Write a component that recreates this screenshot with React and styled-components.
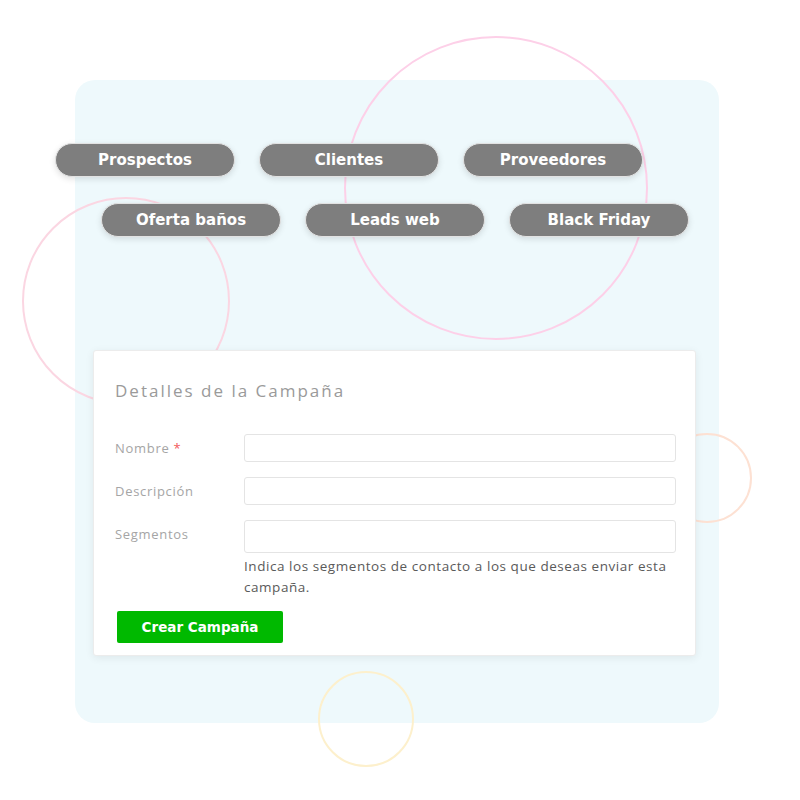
import React from "react";
import styled, { createGlobalStyle } from "styled-components";

const Global = createGlobalStyle`
  html, body { margin: 0; padding: 0; background: #ffffff; }
  body { font-family: "Open Sans", "Noto Sans", sans-serif; }
  * { box-sizing: border-box; }
`;

const Stage = styled.div`
  width: 800px;
  height: 800px;
  padding: 80px 81px 77px 75px;
`;

const Panel = styled.div`
  position: relative;
  width: 644px;
  height: 643px;
  background: #eef9fc;
  border-radius: 20px;
  display: flex;
  flex-direction: column;
`;

const Ring = styled.div`
  position: absolute;
  left: ${(p) => p.$x}px;
  top: ${(p) => p.$y}px;
  width: ${(p) => p.$size}px;
  height: ${(p) => p.$size}px;
  border-radius: 50%;
  border: 2px solid ${(p) => p.$color};
  z-index: 0;
`;

const TagArea = styled.div`
  position: relative;
  z-index: 1;
  margin: 63px 0 0 -20px;
  display: flex;
  flex-direction: column;
  gap: 26px;
`;

const TagRow = styled.div`
  display: flex;
  align-items: flex-start;
  gap: 24px;
  height: 34px;
  padding-left: ${(p) => p.$indent}px;
`;

const Tag = styled.div`
  width: 180px;
  height: 34px;
  border-radius: 17px;
  background: #7e7e7e;
  border: 1px solid #e2e2e2;
  box-shadow: 0 2px 6px rgba(0, 0, 0, 0.12);
  color: #ffffff;
  font-family: "DejaVu Sans", "Open Sans", sans-serif;
  font-weight: 700;
  font-size: 15px;
  display: flex;
  align-items: center;
  justify-content: center;
`;

const Card = styled.div`
  position: relative;
  z-index: 1;
  margin: 113px 23px 0 18px;
  height: 306px;
  background: #ffffff;
  border: 1px solid #ececec;
  border-radius: 3px;
  box-shadow: 0 2px 8px rgba(0, 0, 0, 0.07);
  padding: 29px 19px 12px 21px;
`;

const Title = styled.h2`
  margin: 0;
  font-family: "Open Sans", sans-serif;
  font-weight: 400;
  font-size: 17px;
  line-height: 22px;
  letter-spacing: 2px;
  color: #9a9a9a;
`;

const Form = styled.div`
  margin-top: 32px;
  display: grid;
  grid-template-columns: 129px 1fr;
  row-gap: 15px;
`;

const Label = styled.label`
  font-family: "Open Sans", sans-serif;
  font-size: 13px;
  line-height: 28px;
  letter-spacing: 0.7px;
  color: #a5a5a5;
`;

const Req = styled.span`
  color: #f25a5a;
  margin-left: 4px;
`;

const Field = styled.div`
  display: flex;
  flex-direction: column;
`;

const Input = styled.div`
  height: ${(p) => p.$h}px;
  border: 1px solid #e4e4e4;
  border-radius: 3px;
  background: #fff;
`;

const Help = styled.p`
  margin: 3px 0 0;
  font-family: "Open Sans", sans-serif;
  font-size: 13.5px;
  line-height: 21px;
  letter-spacing: 0.55px;
  color: #5a5a5a;
`;

const Button = styled.button`
  margin-top: 13px;
  margin-left: 2px;
  width: 166px;
  height: 32px;
  border: none;
  border-radius: 2px;
  background: #00b900;
  color: #ffffff;
  font-family: "DejaVu Sans", "Open Sans", sans-serif;
  font-weight: 700;
  font-size: 13.5px;
  cursor: pointer;
`;

const tagsRow1 = ["Prospectos", "Clientes", "Proveedores"];
const tagsRow2 = ["Oferta baños", "Leads web", "Black Friday"];

export default function App() {
  return (
    <>
      <Global />
      <Stage>
        <Panel>
          <Ring $x={269} $y={-44} $size={304} $color="#fdd0e8" />
          <Ring $x={-53} $y={117} $size={208} $color="#fbd6e2" />
          <Ring $x={587} $y={353} $size={90} $color="#fde1d3" />
          <Ring $x={243} $y={591} $size={96} $color="#fdf0cc" />
          <TagArea>
            <TagRow $indent={0}>
              {tagsRow1.map((t) => (
                <Tag key={t}>{t}</Tag>
              ))}
            </TagRow>
            <TagRow $indent={46}>
              {tagsRow2.map((t) => (
                <Tag key={t}>{t}</Tag>
              ))}
            </TagRow>
          </TagArea>
          <Card>
            <Title>Detalles de la Campaña</Title>
            <Form>
              <Label>
                Nombre<Req>*</Req>
              </Label>
              <Field>
                <Input $h={28} />
              </Field>
              <Label>Descripción</Label>
              <Field>
                <Input $h={28} />
              </Field>
              <Label>Segmentos</Label>
              <Field>
                <Input $h={33} />
                <Help>
                  Indica los segmentos de contacto a los que deseas enviar esta
                  campaña.
                </Help>
              </Field>
            </Form>
            <Button>Crear Campaña</Button>
          </Card>
        </Panel>
      </Stage>
    </>
  );
}
